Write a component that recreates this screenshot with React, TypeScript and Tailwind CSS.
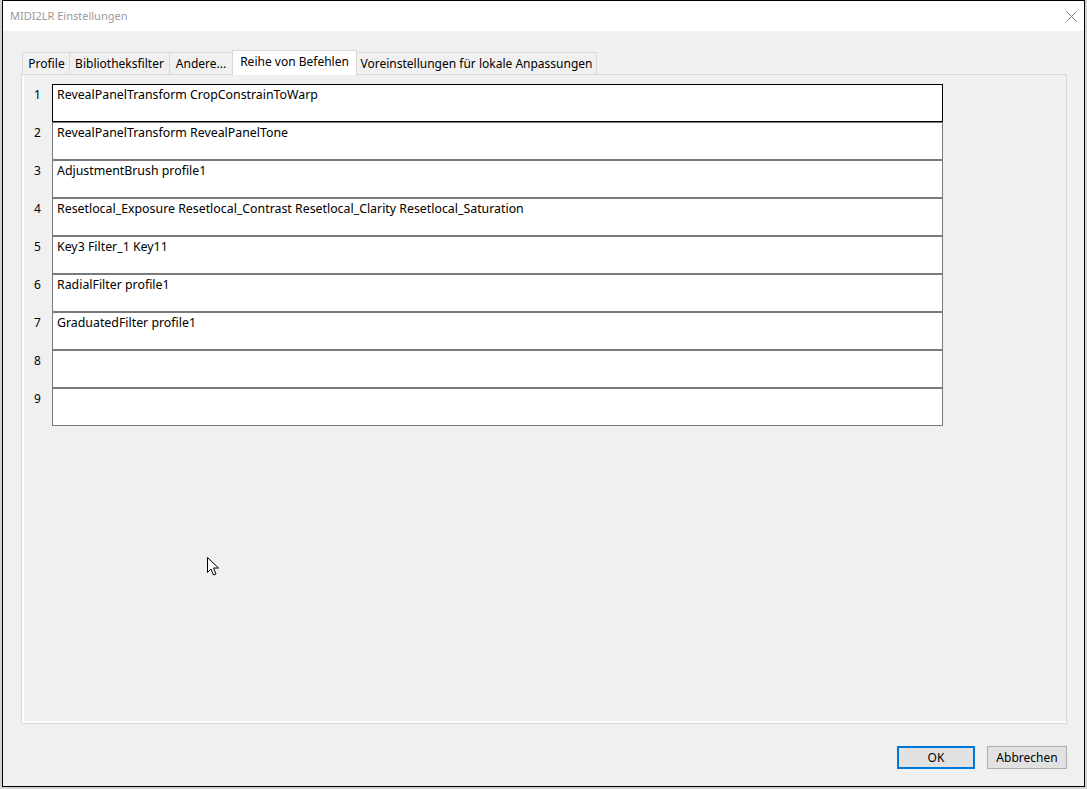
import React from "react";

const rows = [
  "RevealPanelTransform CropConstrainToWarp",
  "RevealPanelTransform RevealPanelTone",
  "AdjustmentBrush profile1",
  "Resetlocal_Exposure Resetlocal_Contrast Resetlocal_Clarity Resetlocal_Saturation",
  "Key3 Filter_1 Key11",
  "RadialFilter profile1",
  "GraduatedFilter profile1",
  "",
  "",
];

export default function App() {
  return (
    <div
      className="relative w-[1087px] h-[789px] bg-[#d2d2d2] pl-[2px] pr-[2px] pb-[2px] text-[12px] leading-[16px] text-black"
      style={{ fontFamily: '"Noto Sans", "Open Sans", sans-serif' }}
    >
      <div className="flex flex-col h-full border border-black bg-[#f0f0f0]">
        {/* title bar */}
        <div className="h-[30px] bg-white flex items-center justify-between pl-[7px] pr-[7px]">
          <div className="text-[11px] text-[#9a9a9a]">MIDI2LR Einstellungen</div>
          <svg width="11" height="11" viewBox="0 0 11 11">
            <path d="M0.5 0.5 L10.5 10.5 M10.5 0.5 L0.5 10.5" stroke="#7a7a7a" strokeWidth="1" />
          </svg>
        </div>

        <div className="flex-1 flex flex-col pt-[19px] pl-[18px] pr-[17px] pb-[17px]">
          {/* tabs */}
          <div className="flex items-end h-[24px] pl-[1px]">
            <div className="w-[47px] h-[22px] border-l border-t border-[#d9d9d9] flex items-center justify-center pl-px">
              Profile
            </div>
            <div className="w-[100px] h-[22px] border-l border-t border-[#d9d9d9] flex items-center justify-center">
              Bibliotheksfilter
            </div>
            <div className="w-[63px] h-[22px] border-l border-t border-[#d9d9d9] flex items-center justify-center">
              Andere...
            </div>
            <div className="relative z-10 w-[125px] h-[25px] -mb-px bg-white border border-b-0 border-[#d9d9d9] flex items-start justify-center pt-[3px]">
              Reihe von Befehlen
            </div>
            <div className="w-[240px] h-[22px] border-r border-t border-[#d9d9d9] flex items-center justify-center">
              Voreinstellungen für lokale Anpassungen
            </div>
          </div>

          {/* panel */}
          <div className="flex-1 border border-[#d9d9d9]">
            <div className="h-full border-l-2 border-b-2 border-white pt-[9px]">
              {rows.map((text, i) => (
                <div key={i} className="flex">
                  <div className="w-[28px] pl-[10px] pt-[3px]">{i + 1}</div>
                  <div
                    className={`w-[891px] h-[38px] border bg-white pl-[4px] pt-[2px] text-[12.35px] ${
                      i === 0 ? "border-black" : "border-[#7a7a7a]"
                    }`}
                  >
                    {text}
                  </div>
                </div>
              ))}
            </div>
          </div>

          {/* buttons */}
          <div className="flex justify-end gap-[12px] mt-[22px]">
            <button className="w-[78px] h-[23px] border-2 border-[#0078d7] bg-[#e1e1e1] flex items-center justify-center">
              OK
            </button>
            <button className="w-[80px] h-[23px] border border-[#adadad] bg-[#e1e1e1] flex items-center justify-center">
              Abbrechen
            </button>
          </div>
        </div>
      </div>

      {/* mouse pointer */}
      <svg
        className="absolute left-[206px] top-[556px]"
        width="14"
        height="21"
        viewBox="0 0 14 21"
      >
        <path
          d="M1.5 1.5 L1.5 16.5 L5 13 L7.5 19 L10 18 L7.5 12 L12.5 12 Z"
          fill="white"
          stroke="black"
          strokeWidth="1"
          strokeLinejoin="miter"
        />
      </svg>
    </div>
  );
}
